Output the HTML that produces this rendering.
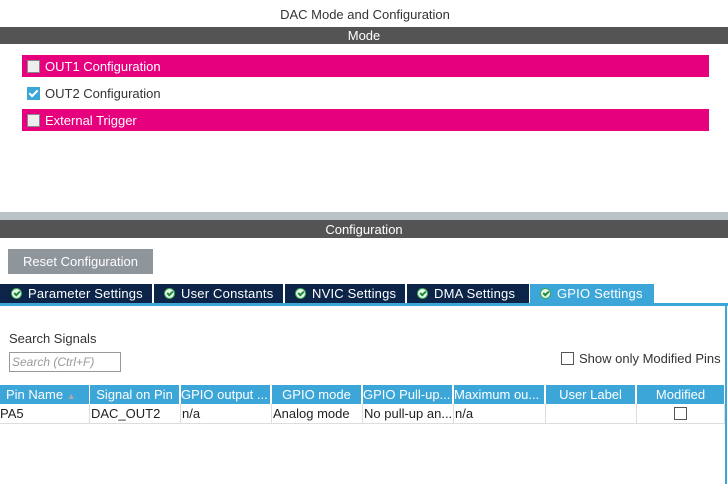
<!DOCTYPE html>
<html><head><style>
body{margin:0;width:728px;height:484px;background:#fff;font-family:"Liberation Sans",sans-serif;font-size:13px;color:#333;position:relative;overflow:hidden}
.a{position:absolute}
.pink{background:#e6007e;color:#fff;left:22px;width:687px;height:22px;line-height:23px}
.cb{display:inline-block;width:11px;height:11px;background:#eee;border:1px solid #888;vertical-align:-2px;margin:0 5px 0 5px}
.tab{position:absolute;top:284px;height:19px;line-height:19px;background:#0b2447;color:#fff;font-size:13px;white-space:nowrap;letter-spacing:0.2px}
.ck{display:inline-block;width:9px;height:9px;border-radius:50%;background:#e8f7ea;border:1px solid #3aa857;vertical-align:-1px;margin:0 6px 0 11px;position:relative}
.ck:after{content:"";position:absolute;left:3px;top:1px;width:2px;height:4px;border:solid #1c8a3a;border-width:0 2px 2px 0;transform:rotate(45deg)}
.th{position:absolute;top:385px;height:19px;line-height:19px;background:#3ca6d8;color:#fff;text-align:center;white-space:nowrap;overflow:hidden}
.td{position:absolute;top:404px;height:19px;line-height:19px;color:#222;white-space:nowrap;overflow:hidden;border-right:1px solid #ddd}
</style></head><body>
<div class="a" style="top:7px;width:730px;text-align:center;font-size:13px;color:#333">DAC Mode and Configuration</div>
<div class="a" style="top:27px;left:0;width:728px;height:17px;background:#545454;color:#fff;text-align:center;line-height:18px">Mode</div>
<div class="a pink" style="top:55px"><span class="cb"></span>OUT1 Configuration</div>
<div class="a" style="top:82px;left:22px;height:22px;line-height:23px"><span class="cb" style="background:#3ca6d8;border-color:#3ca6d8;position:relative"><span style="position:absolute;left:3px;top:0px;width:3px;height:7px;border:solid #fff;border-width:0 2px 2px 0;transform:rotate(45deg)"></span></span>OUT2 Configuration</div>
<div class="a pink" style="top:109px"><span class="cb"></span>External Trigger</div>
<div class="a" style="top:212px;left:0;width:728px;height:8px;background:#b8c4c8"></div>
<div class="a" style="top:220px;left:0;width:728px;height:18px;background:#545454;color:#fff;text-align:center;line-height:19px">Configuration</div>
<div class="a" style="top:249px;left:8px;width:145px;height:25px;background:#8e959b;color:#fff;text-align:center;line-height:26px">Reset Configuration</div>
<div class="tab" style="left:0;width:152px"><span class="ck"></span>Parameter Settings</div>
<div class="tab" style="left:154px;width:129px;"><span class="ck" style="margin-left:10px"></span>User Constants</div>
<div class="tab" style="left:285px;width:120px"><span class="ck" style="margin-left:10px"></span>NVIC Settings</div>
<div class="tab" style="left:407px;width:122px"><span class="ck" style="margin-left:10px"></span>DMA Settings</div>
<div class="tab" style="left:530px;width:124px;background:#3ca6d8"><span class="ck" style="margin-left:10px"></span>GPIO Settings</div>
<div class="a" style="top:303px;left:0;width:728px;height:3px;background:#3ca6d8"></div>
<div class="a" style="top:306px;left:725px;width:2px;height:178px;background:#3ca6d8"></div>
<div class="a" style="top:331px;left:9px">Search Signals</div>
<div class="a" style="top:352px;left:9px;width:112px;height:20px;border:1px solid #999;color:#999;font-style:italic;line-height:18px;box-sizing:border-box;padding-left:2px;font-size:12px">Search (Ctrl+F)</div>
<div class="a" style="top:351px;left:561px;line-height:16px"><span class="cb" style="background:#fff;border-color:#555;margin:0 5px 0 0"></span>Show only Modified Pins</div>
<div class="th" style="left:0;width:89px;text-align:left;padding-left:6px;box-sizing:border-box">Pin Name <span style="color:#aaa;font-size:9px">&#9650;</span></div>
<div class="th" style="left:90px;width:89px">Signal on Pin</div>
<div class="th" style="left:181px;width:89px;text-align:left">GPIO output ...</div>
<div class="th" style="left:272px;width:89px">GPIO mode</div>
<div class="th" style="left:363px;width:89px;text-align:left">GPIO Pull-up...</div>
<div class="th" style="left:454px;width:90px;text-align:left">Maximum ou...</div>
<div class="th" style="left:546px;width:89px">User Label</div>
<div class="th" style="left:637px;width:87px">Modified</div>
<div class="td" style="left:0;width:89px">PA5</div>
<div class="td" style="left:91px;width:89px">DAC_OUT2</div>
<div class="td" style="left:182px;width:89px">n/a</div>
<div class="td" style="left:273px;width:89px">Analog mode</div>
<div class="td" style="left:364px;width:89px">No pull-up an...</div>
<div class="td" style="left:455px;width:90px">n/a</div>
<div class="td" style="left:546px;width:90px"></div>
<div class="td" style="left:637px;width:87px;text-align:center"><span class="cb" style="background:#fff;border-color:#555;margin:0"></span></div>
<div class="a" style="top:423px;left:0;width:725px;height:1px;background:#ddd"></div>
</body></html>
